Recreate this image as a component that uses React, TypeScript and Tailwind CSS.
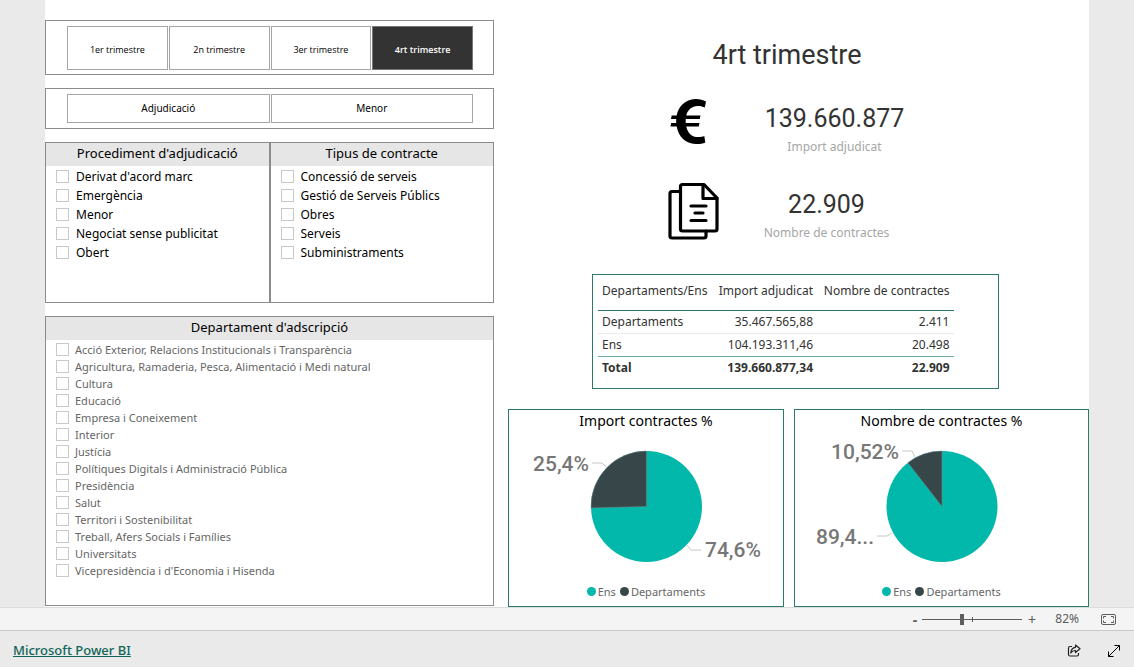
const trimestres = ["1er trimestre", "2n trimestre", "3er trimestre", "4rt trimestre"];

const procediments = [
  "Derivat d'acord marc",
  "Emergència",
  "Menor",
  "Negociat sense publicitat",
  "Obert",
];

const tipus = [
  "Concessió de serveis",
  "Gestió de Serveis Públics",
  "Obres",
  "Serveis",
  "Subministraments",
];

const departaments = [
  "Acció Exterior, Relacions Institucionals i Transparència",
  "Agricultura, Ramaderia, Pesca, Alimentació i Medi natural",
  "Cultura",
  "Educació",
  "Empresa i Coneixement",
  "Interior",
  "Justícia",
  "Polítiques Digitals i Administració Pública",
  "Presidència",
  "Salut",
  "Territori i Sostenibilitat",
  "Treball, Afers Socials i Famílies",
  "Universitats",
  "Vicepresidència i d'Economia i Hisenda",
];

type SlicerProps = {
  title: string;
  items: string[];
  small?: boolean;
  className?: string;
};

const Slicer = ({ title, items, small, className = "" }: SlicerProps) => {
  return (
    <section className={`min-w-0 border border-[#8c8c8c] ${className}`}>
      <h2 className="h-[23px] bg-[#e6e6e6] text-center text-[13px] leading-[21px] text-black">
        {title}
      </h2>
      <ul className="pt-px pl-[10px]">
        {items.map((item) => {
          return (
            <li key={item}>
              <label
                className={
                  small
                    ? "flex h-[17px] items-center gap-[6px] text-[11px] leading-[17px] whitespace-nowrap text-[#666]"
                    : "flex h-[19px] items-center gap-[7px] text-[12px] leading-[19px] whitespace-nowrap text-black"
                }
              >
                <input
                  type="checkbox"
                  className="size-[13px] shrink-0 appearance-none border border-[#c8c8c8] bg-white checked:bg-[#333]"
                />
                {item}
              </label>
            </li>
          );
        })}
      </ul>
    </section>
  );
};

const Legend = () => {
  return (
    <div className="flex items-center justify-center gap-1 pb-1 text-[11px] leading-[20px] text-[#666]">
      <span className="flex items-center gap-[2px]">
        <span className="size-[9px] rounded-full bg-[#01b8aa]" />
        Ens
      </span>
      <span className="flex items-center gap-[2px]">
        <span className="size-[9px] rounded-full bg-[#374649]" />
        Departaments
      </span>
    </div>
  );
};

const App = () => {
  return (
    <div className="flex min-h-screen flex-col bg-[#eaeaea] font-['Noto_Sans','Open_Sans',sans-serif]">
      <main className="mx-[45px] grid grow grid-cols-[449fr_581fr] gap-x-[14px] bg-white">
        {/* FILTERS */}
        <div className="flex flex-col gap-[13px] pt-5 pb-px">
          <div className="flex gap-px border border-[#8c8c8c] pt-[5px] pr-5 pb-1 pl-[21px] font-['Open_Sans',sans-serif]">
            {trimestres.map((t) => {
              return (
                <button
                  key={t}
                  className={
                    t === "4rt trimestre"
                      ? "h-11 flex-1 border border-[#777] bg-[#333] pt-[3px] text-[9px] font-semibold text-white"
                      : "h-11 flex-1 border border-[#a6a6a6] bg-white pt-[3px] text-[9px] text-black"
                  }
                >
                  {t}
                </button>
              );
            })}
          </div>
          <div className="flex gap-px border border-[#8c8c8c] py-[5px] pr-5 pl-[21px]">
            <button className="h-[29px] flex-1 border border-[#a6a6a6] text-[10px]">
              Adjudicació
            </button>
            <button className="h-[29px] flex-1 border border-[#a6a6a6] text-[10px]">
              Menor
            </button>
          </div>
          <div className="grid min-h-[161px] grid-cols-2">
            <Slicer title="Procediment d'adjudicació" items={procediments} />
            <Slicer title="Tipus de contracte" items={tipus} />
          </div>
          <Slicer
            title="Departament d'adscripció"
            items={departaments}
            small
            className="grow"
          />
        </div>

        {/* RESULTS */}
        <div className="flex flex-col">
          <h1 className="mt-[37px] pr-[23px] text-center font-[Roboto,sans-serif] text-[27px] leading-[36px] text-[#333]">
            4rt trimestre
          </h1>
          <div className="mt-6 grid grid-cols-[52px_144px] justify-center gap-x-[44px] pr-6">
            <svg viewBox="0 0 52 50" className="h-[50px] w-[52px]" aria-hidden="true">
              <path
                d="M39 4.500L37.800 10.500C35 9 32 8.500 28.500 9.300C23.500 10.500 20.500 13.500 19.300 18.500H33.500L32.800 22H18.700V26H32.500L31.800 29.500H19.300C20.500 35.500 24 39.500 29.500 40C32.500 40.200 35.500 39.800 37.300 39L38.300 45.500C35.500 46.700 32 47.200 28.500 47C18.500 46.500 11.500 40 9.700 29.500H3.500L4.200 26H9.200V22H4L4.700 18.500H9.700C11.500 9 18.500 2.500 28 2C32 1.800 36 2.700 39 4.500Z"
                fill="#000"
              />
            </svg>
            <div className="text-center">
              <p className="font-[Roboto,sans-serif] text-[25px] leading-[44px] text-[#333]">
                139.660.877
              </p>
              <p className="text-[12px] leading-[12px] text-[#a6a6a6]">Import adjudicat</p>
            </div>
            <svg
              viewBox="0 0 52 58"
              className="mt-[29px] h-[58px] w-[52px]"
              fill="none"
              stroke="#000"
              strokeWidth="3.200"
              strokeLinecap="round"
              strokeLinejoin="round"
              aria-hidden="true"
            >
              <path d="M13 9.500H5Q3 9.500 3 11.500V54Q3 56 5 56H37Q39 56 39 54V49" />
              <path d="M15.500 2.500H37L50 16V47Q50 49 48 49H15.500Q13.500 49 13.500 47V4.500Q13.500 2.500 15.500 2.500Z" />
              <path d="M36 2.500V16.500H50M24 24H39M28 31H36M24 38.500H39" />
            </svg>
            <div className="mt-[30px] pr-4 text-center">
              <p className="font-[Roboto,sans-serif] text-[25px] leading-[44px] text-[#333]">
                22.909
              </p>
              <p className="text-[12px] leading-[12px] text-[#a6a6a6]">Nombre de contractes</p>
            </div>
          </div>

          <div className="mt-[34px] mr-[90px] ml-[84px] border border-[#2b7a6d] px-[5px] pt-px pb-[9px]">
            <table className="w-[90%] table-fixed border-collapse text-[12px] leading-[22px] whitespace-nowrap text-[#333]">
              <thead>
                <tr className="h-[34px] border-b border-[#2b7a6d] align-top leading-[30px]">
                  <th className="w-[114px] pl-1 text-left font-normal">Departaments/Ens</th>
                  <th className="w-[105px] pr-1 text-right font-normal">Import adjudicat</th>
                  <th className="pr-1 text-right font-normal">Nombre de contractes</th>
                </tr>
              </thead>
              <tbody>
                <tr className="border-b border-[#eaeaea]">
                  <td className="pl-1">Departaments</td>
                  <td className="pr-1 text-right">35.467.565,88</td>
                  <td className="pr-1 text-right">2.411</td>
                </tr>
                <tr className="border-b border-[#6aa79e]">
                  <td className="pl-1">Ens</td>
                  <td className="pr-1 text-right">104.193.311,46</td>
                  <td className="pr-1 text-right">20.498</td>
                </tr>
                <tr className="font-bold">
                  <td className="pl-1">Total</td>
                  <td className="pr-1 text-right">139.660.877,34</td>
                  <td className="pr-1 text-right">22.909</td>
                </tr>
              </tbody>
            </table>
          </div>

          {/* CHARTS */}
          <div className="mt-5 grid grow grid-cols-[276fr_295fr] gap-[10px]">
            <section className="border border-[#2b7a6d]">
              <h2 className="mb-px text-center text-[14px] leading-[22px] text-black">
                Import contractes %
              </h2>
              <svg viewBox="0 0 274 149" className="w-full">
                <circle cx="137.500" cy="73.500" r="55.500" fill="#01b8aa" />
                <path
                  d="M137.500 73.500V18A55.500 55.500 0 0 0 82 74.900Z"
                  fill="#374649"
                  stroke="#7f8b8c"
                  strokeWidth="0.500"
                />
                <path
                  d="M83 30H93L98 35M178 112L182 117H192"
                  fill="none"
                  stroke="#c8c8c8"
                />
                <g className="fill-[#777] font-[Roboto,sans-serif] text-[21px] font-medium">
                  <text x="80" y="38" textAnchor="end">25,4%</text>
                  <text x="196" y="124">74,6%</text>
                </g>
              </svg>
              <Legend />
            </section>
            <section className="border border-[#2b7a6d]">
              <h2 className="mb-px text-center text-[14px] leading-[22px] text-black">
                Nombre de contractes %
              </h2>
              <svg viewBox="0 0 293 149" className="w-full">
                <circle cx="147" cy="73.500" r="55.500" fill="#01b8aa" />
                <path
                  d="M147 73.500V18A55.500 55.500 0 0 0 112.900 29.700Z"
                  fill="#374649"
                  stroke="#7f8b8c"
                  strokeWidth="0.500"
                />
                <path
                  d="M107 18H117L120 24M82 103H92L97 100"
                  fill="none"
                  stroke="#c8c8c8"
                />
                <g className="fill-[#777] font-[Roboto,sans-serif] text-[21px] font-medium">
                  <text x="104" y="26" textAnchor="end">10,52%</text>
                  <text x="79" y="111" textAnchor="end">89,4...</text>
                </g>
              </svg>
              <Legend />
            </section>
          </div>
        </div>
      </main>

      {/* ZOOM BAR */}
      <div className="flex h-6 items-center justify-end border-t border-b border-t-[#dcdcdc] border-b-[#c8c8c8] bg-[#f4f4f4] pr-[18px] text-[12px] text-[#605e5c]">
        <button className="w-[14px] text-center text-[14px] font-bold" aria-label="Redueix">
          -
        </button>
        <div className="relative flex h-4 w-[100px] items-center">
          <input
            type="range"
            aria-label="Zoom"
            defaultValue={40}
            className="h-px w-full appearance-none bg-[#605e5c] [&::-webkit-slider-thumb]:h-[11px] [&::-webkit-slider-thumb]:w-1 [&::-webkit-slider-thumb]:appearance-none [&::-webkit-slider-thumb]:bg-[#605e5c]"
          />
          <span className="absolute top-[6px] left-[50px] h-[5px] w-px bg-[#605e5c]" />
        </div>
        <button className="w-5 text-center text-[14px]" aria-label="Amplia">
          +
        </button>
        <span className="w-[54px] pr-[17px] text-right">82%</span>
        <button className="ml-[5px]" aria-label="Ajusta a la pàgina">
          <svg viewBox="0 0 15 11" className="h-[11px] w-[15px]" fill="none" stroke="#605e5c">
            <rect x="0.500" y="0.500" width="14" height="10" rx="1.500" />
            <path d="M5 2.500H2.500V4.500M10 2.500H12.500V4.500M5 8.500H2.500V6.500M10 8.500H12.500V6.500" />
          </svg>
        </button>
      </div>

      {/* FOOTER */}
      <footer className="flex h-9 items-center justify-between bg-[#eaeaea] pt-1 pr-[13px] pl-[13px]">
        <a href="#" className="text-[13px] font-medium text-[#0f6558] underline">
          Microsoft Power BI
        </a>
        <div className="flex items-center gap-[26px]">
          <button aria-label="Comparteix">
            <svg viewBox="0 0 14 14" className="size-[14px]" fill="none" stroke="#222" strokeWidth="1.200">
              <path d="M5 2.500H3Q1.500 2.500 1.500 4V10.500Q1.500 12 3 12H10Q11.500 12 11.500 10.500V9" />
              <path
                d="M8.500 1L13 4.800L8.500 8.500V6.500Q5.500 6.300 3.800 9Q4.200 3.800 8.500 3.300Z"
                strokeLinejoin="round"
              />
            </svg>
          </button>
          <button aria-label="Pantalla completa">
            <svg viewBox="0 0 14 14" className="size-[14px]" fill="none" stroke="#000">
              <path d="M1.500 12.500L12.500 1.500M7.500 1.500H12.500V6.500M1.500 7.500V12.500H6.500" />
            </svg>
          </button>
        </div>
      </footer>
    </div>
  );
};

export default App;
